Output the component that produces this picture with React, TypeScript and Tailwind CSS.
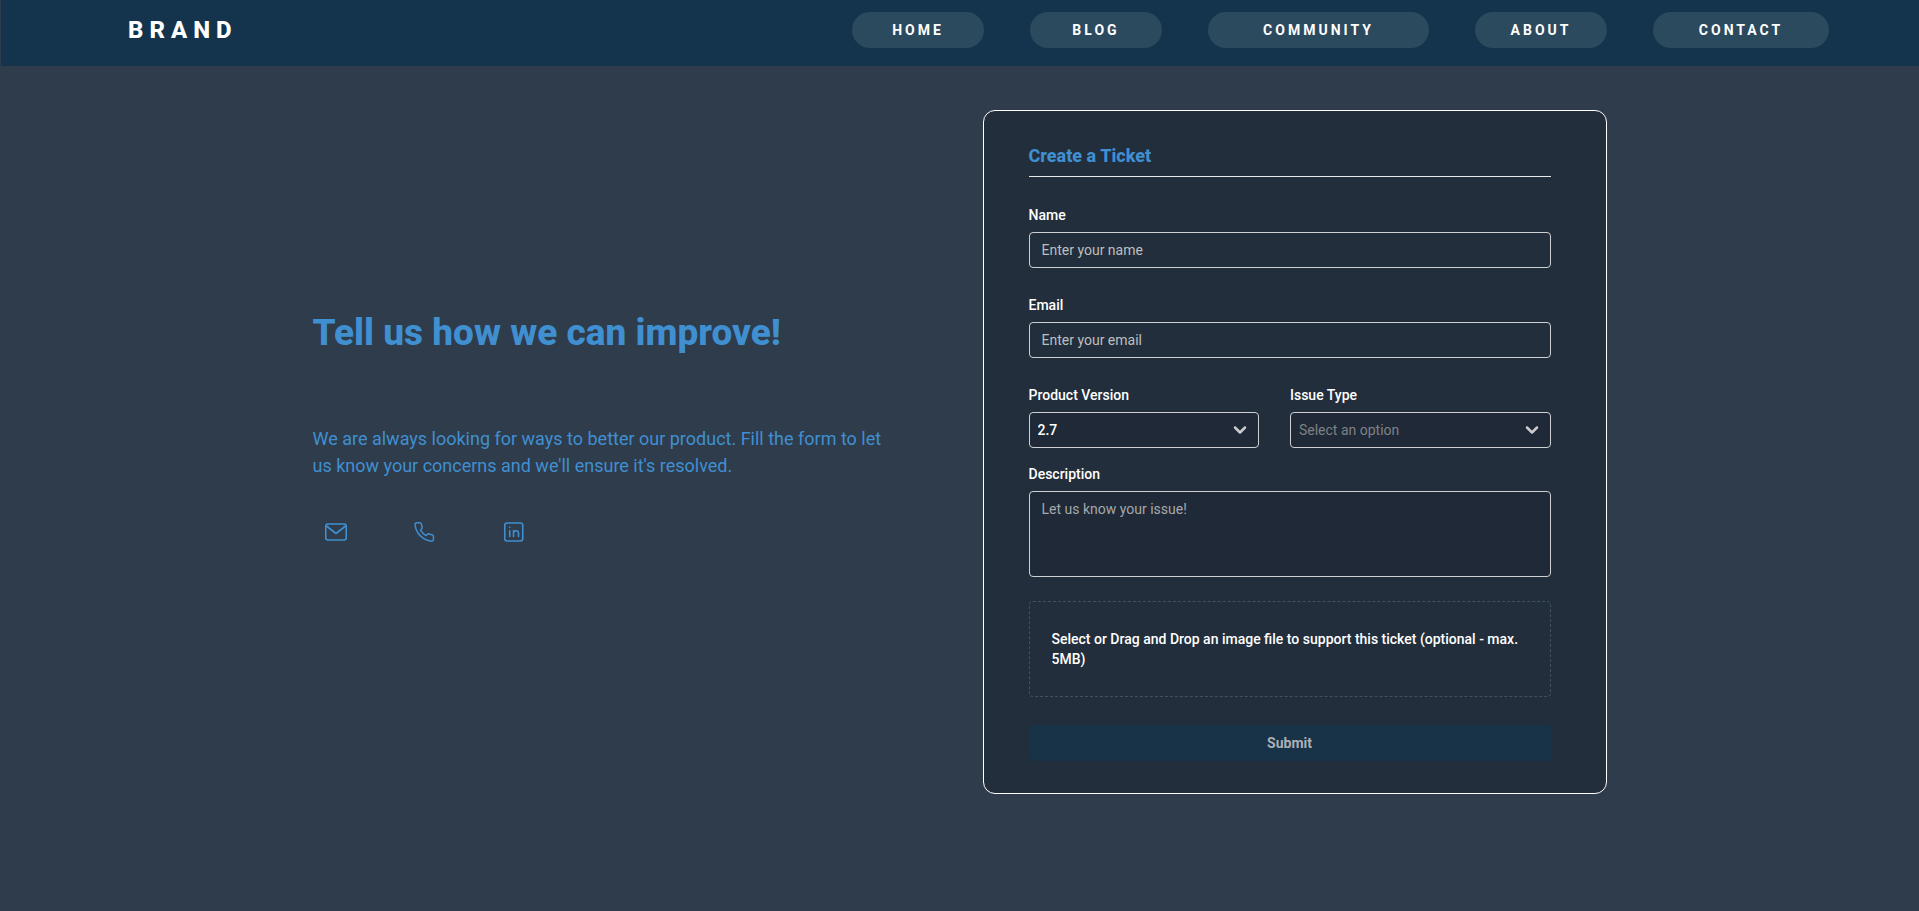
import type { ReactNode } from "react";
import { ChevronDown } from "lucide-react";

const navItems = [
  { label: "HOME", width: "w-[132px]" },
  { label: "BLOG", width: "w-[132px]" },
  { label: "COMMUNITY", width: "w-[221px]" },
  { label: "ABOUT", width: "w-[132px]" },
  { label: "CONTACT", width: "w-[176px]" },
];

const fieldClass =
  "block w-full rounded border border-[#ced0d3] text-sm focus:outline-none focus:border-[#408fd1]";

function Icon({ children }: { children: ReactNode }) {
  return (
    <svg
      viewBox="0 0 24 24"
      className="size-6"
      fill="none"
      stroke="currentColor"
      strokeWidth="1.6"
      strokeLinecap="round"
      strokeLinejoin="round"
      aria-hidden="true"
    >
      {children}
    </svg>
  );
}

function Field({ id, label, children }: { id: string; label: string; children: ReactNode }) {
  return (
    <div className="flex flex-col gap-[7px]">
      <label htmlFor={id} className="text-sm font-medium text-white">
        {label}
      </label>
      {children}
    </div>
  );
}

function SelectBox({
  id,
  tone,
  options,
}: {
  id: string;
  tone: string;
  options: string[];
}) {
  return (
    <div className="relative">
      <select id={id} className={`${fieldClass} ${tone} h-9 appearance-none bg-[#1f2937] pl-2 pr-9`}>
        {options.map((option) => (
          <option key={option}>{option}</option>
        ))}
      </select>
      <ChevronDown
        size={20}
        strokeWidth={3}
        className="pointer-events-none absolute right-[9px] top-2 text-[#cccccc]"
      />
    </div>
  );
}

function Header() {
  return (
    <header className="ml-px flex h-[66px] items-start justify-between bg-[#13344c] pl-[127px] pr-[90px] pt-3">
      <a href="#" className="text-2xl/9 font-extrabold tracking-[6px] text-white">
        BRAND
      </a>
      <nav>
        <ul className="flex gap-[46px]">
          {navItems.map((item) => (
            <li key={item.label}>
              <a
                href="#"
                className={`${item.width} flex h-9 items-center justify-center rounded-full bg-[#2c4a5e] text-sm font-bold tracking-[3px] text-white`}
              >
                {item.label}
              </a>
            </li>
          ))}
        </ul>
      </nav>
    </header>
  );
}

function Intro() {
  return (
    <section className="max-w-[590px] flex-1 pt-[203px] text-[#408fd1]">
      <h1 className="text-[37px]/10 font-extrabold">Tell us how we can improve!</h1>
      <p className="mt-[72px] text-lg/[27px]">
        We are always looking for ways to better our product. Fill the form to let us know your
        concerns and we'll ensure it's resolved.
      </p>
      <div className="mt-[41px] flex gap-[65px] pl-[11px]">
        <a href="#" aria-label="Email">
          <Icon>
            <rect x="1.75" y="4" width="20.5" height="16" rx="2.25" />
            <path d="M2.5 6l9.5 7.5L21.5 6" />
          </Icon>
        </a>
        <a href="#" aria-label="Phone">
          <Icon>
            <path
              transform="translate(0 .8) scale(.93)"
              d="M22 16.92v3a2 2 0 0 1-2.18 2 19.79 19.79 0 0 1-8.63-3.07 19.5 19.5 0 0 1-6-6 19.79 19.79 0 0 1-3.07-8.67A2 2 0 0 1 4.11 2h3a2 2 0 0 1 2 1.72 12.84 12.84 0 0 0 .7 2.81 2 2 0 0 1-.45 2.11L8.09 9.91a16 16 0 0 0 6 6l1.27-1.27a2 2 0 0 1 2.11-.45 12.84 12.84 0 0 0 2.81.7A2 2 0 0 1 22 16.92z"
            />
          </Icon>
        </a>
        <a href="#" aria-label="LinkedIn">
          <Icon>
            <rect x="2.75" y="3" width="18" height="18" rx="2.25" />
            <path d="M7.75 10.75v5.75M7.75 7.4v.1M11.5 16.5v-5.75M11.5 13.25c0-1.6 1-2.5 2.5-2.5s2.5.9 2.5 2.5v3.25" />
          </Icon>
        </a>
      </div>
    </section>
  );
}

function TicketForm() {
  return (
    <form
      className="w-[624px] shrink-0 rounded-xl border border-white bg-[#222e3c] pb-8 pl-[45px] pr-[55px] pt-[31px]"
      onSubmit={(event) => event.preventDefault()}
    >
      <h2 className="border-b border-[#e8eaec] pb-1.5 text-lg/7 font-extrabold text-[#408fd1]">
        Create a Ticket
      </h2>
      <div className="mt-7 flex flex-col gap-[27px]">
        <Field id="name" label="Name">
          <input
            id="name"
            type="text"
            placeholder="Enter your name"
            className={`${fieldClass} h-9 bg-transparent px-3 text-white placeholder:text-[#bdbebf]`}
          />
        </Field>
        <Field id="email" label="Email">
          <input
            id="email"
            type="email"
            placeholder="Enter your email"
            className={`${fieldClass} h-9 bg-transparent px-3 text-white placeholder:text-[#bdbebf]`}
          />
        </Field>
        <div className="grid grid-cols-[230fr_260fr] gap-x-[31px]">
          <Field id="version" label="Product Version">
            <SelectBox id="version" tone="font-medium text-white" options={["2.7", "2.6", "2.5"]} />
          </Field>
          <Field id="issue" label="Issue Type">
            <SelectBox
              id="issue"
              tone="text-[#7f8184]"
              options={["Select an option", "Bug", "Feature request"]}
            />
          </Field>
        </div>
      </div>
      <div className="mt-4">
        <Field id="description" label="Description">
          <textarea
            id="description"
            placeholder="Let us know your issue!"
            className={`${fieldClass} h-[86px] resize-none bg-[#1f2937] px-3 py-[7px] text-white placeholder:text-[#a5a8ac]`}
          />
        </Field>
      </div>
      <label
        htmlFor="attachment"
        className="relative mt-6 block cursor-pointer rounded border border-dashed border-[#3f5163] px-[22px] py-[27px] text-sm font-medium text-white"
      >
        Select or Drag and Drop an image file to support this ticket (optional - max. 5MB)
        <input id="attachment" type="file" accept="image/*" className="sr-only" />
      </label>
      <button
        type="submit"
        className="mt-7 h-9 w-full rounded bg-[#183247] text-sm font-bold text-[#abb0b6]"
      >
        Submit
      </button>
    </form>
  );
}

export default function App() {
  return (
    <div className="min-h-screen bg-[#2f3c4b] font-[Roboto,'Liberation_Sans',sans-serif]">
      <Header />
      <main className="mx-auto flex max-w-[1294px] justify-between gap-10 pb-12 pt-11">
        <Intro />
        <TicketForm />
      </main>
    </div>
  );
}
